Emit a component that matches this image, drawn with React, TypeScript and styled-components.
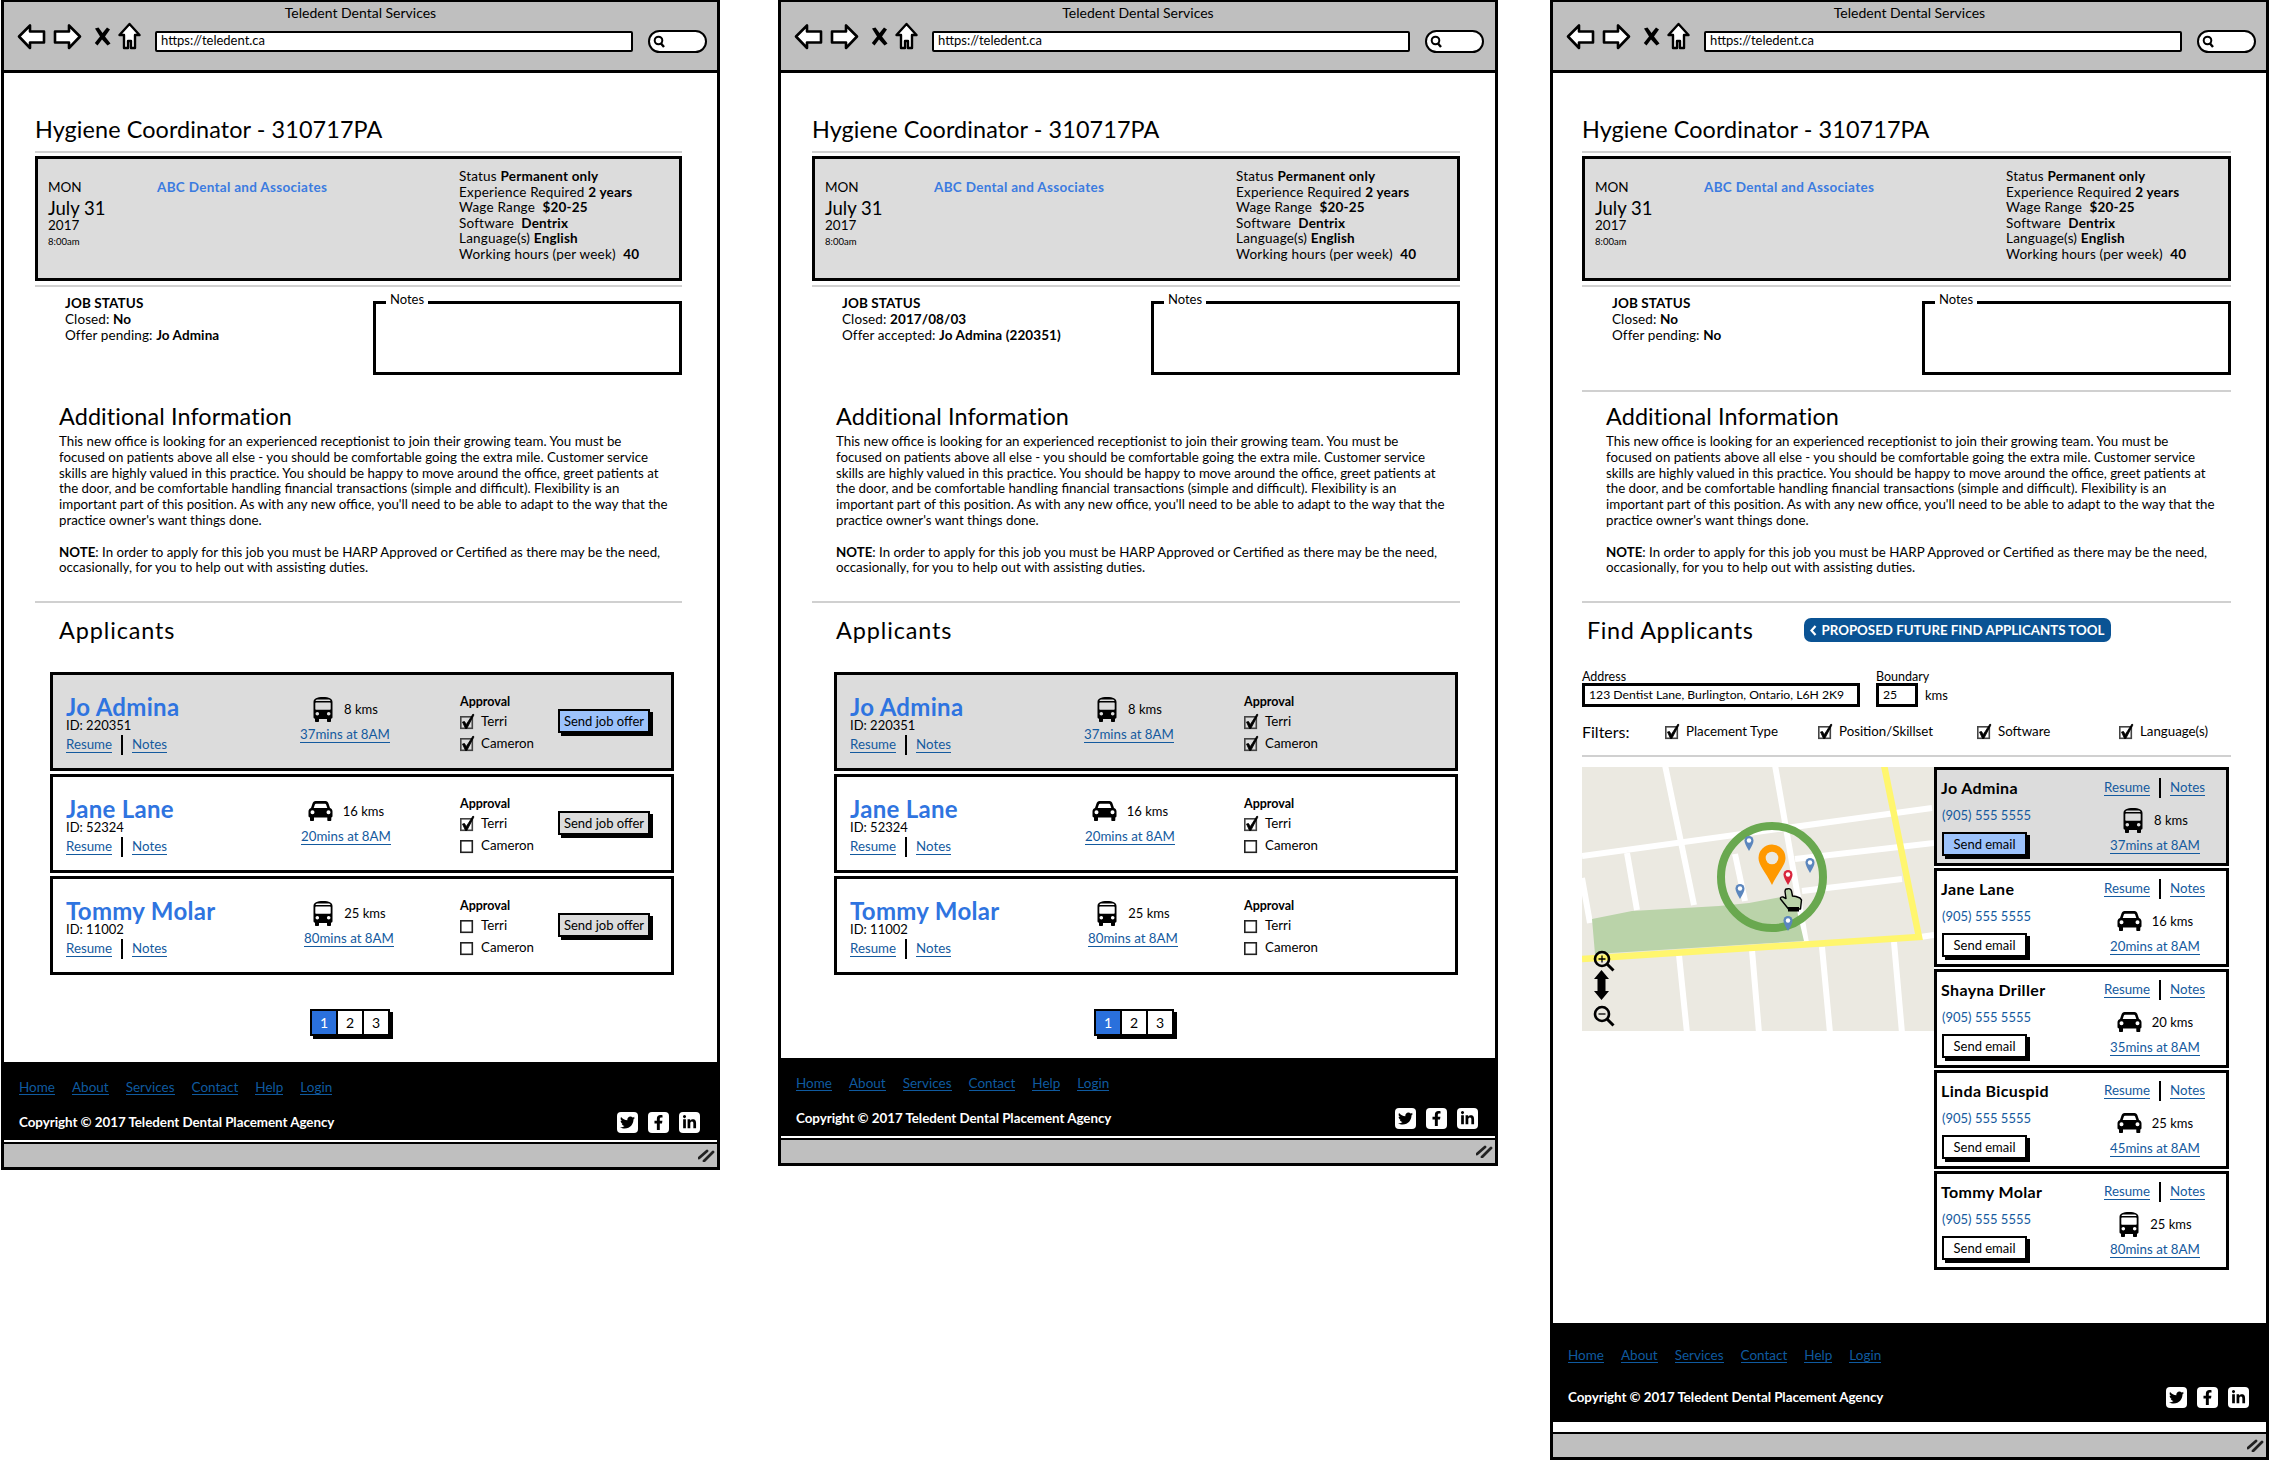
import React from 'react';
import styled, { createGlobalStyle } from 'styled-components';
import { FaTwitter, FaFacebookF, FaLinkedinIn } from 'react-icons/fa';

const Global = createGlobalStyle`
  html, body { margin: 0; padding: 0; background: #fff; }
  body { font-family: Lato, "Open Sans", sans-serif; color: #000; }
  * { box-sizing: border-box; }
`;

const Page = styled.div`
  display: flex;
  align-items: flex-start;
  width: 2269px;
  padding-left: 1px;
`;
const Frame = styled.section<{ $gap: number; $w: number }>`
  width: ${p => p.$w}px;
  margin-left: ${p => p.$gap}px;
  border: 3px solid #000;
  border-top-width: 2px;
  background: #fff;
  flex: none;
`;
const Chrome = styled.header`
  height: 71px;
  background: #bfbfbf;
  border-bottom: 3px solid #000;
  position: relative;
  display: flex;
  flex-direction: column;
  align-items: center;
`;
const ChromeTitle = styled.div`
  font-size: 14px;
  line-height: 18px;
  margin-top: 2px;
`;
const ChromeBar = styled.div`
  width: 100%;
  display: flex;
  align-items: center;
  padding-left: 13px;
  height: 28px;
`;
const NavIcon = styled.svg<{ $mr: number }>`
  margin-right: ${p => p.$mr}px;
  flex: none;
`;
const UrlBar = styled.div`
  width: 478px;
  height: 21px;
  background: #fff;
  border: 2px solid #000;
  border-radius: 2px;
  font-size: 13px;
  line-height: 15px;
  padding-left: 4px;
  margin: 11px 0 0 14px;
`;
const SearchOval = styled.div`
  width: 59px;
  height: 23px;
  margin: 11px 0 0 15px;
  background: #fff;
  border: 2.5px solid #000;
  border-radius: 12px;
  display: flex;
  align-items: center;
  padding-left: 3px;
`;
const Content = styled.main<{ $inset: number }>`
  padding: 0 35px 0 ${p => p.$inset}px;
`;
const PageTitle = styled.h1`
  font-size: 23.4px;
  font-weight: 400;
  line-height: 30px;
  margin: 41px 0 0;
  letter-spacing: 0.1px;
`;
const Rule = styled.hr<{ $mt: number }>`
  height: 2px;
  border: 0;
  background: #d0d0d0;
  margin: ${p => p.$mt}px 0 0;
`;
const JobBox = styled.div`
  height: 125px;
  margin-top: 3px;
  background: #dcdcdc;
  border: 3px solid #000;
  display: grid;
  grid-template-columns: 109px 302px 1fr;
  padding-left: 10px;
`;
const DateCol = styled.div`
  padding-top: 18px;
`;
const DateLine = styled.div<{ $size: number; $lh: number }>`
  font-size: ${p => p.$size}px;
  line-height: ${p => p.$lh}px;
`;
const Company = styled.div`
  padding-top: 20px;
  font-size: 13.5px;
  line-height: 16px;
  font-weight: 700;
  color: #3b7be0;
  letter-spacing: 0.3px;
`;
const FactCol = styled.div`
  padding-top: 10px;
  font-size: 13.5px;
  line-height: 15.5px;
  letter-spacing: 0.2px;
  white-space: nowrap;
`;
const Fact = styled.div``;
const JobRow = styled.div`
  display: flex;
  justify-content: space-between;
  height: 80px;
  margin-top: 8px;
`;
const JobStatus = styled.div`
  padding-left: 30px;
  font-size: 13.5px;
  line-height: 16px;
  letter-spacing: 0.1px;
`;
const NotesBox = styled.div`
  position: relative;
  width: 309px;
  height: 74px;
  margin-top: 6px;
  border: 3px solid #000;
`;
const NotesLegend = styled.span`
  position: absolute;
  top: -12px;
  left: 10px;
  background: #fff;
  padding: 0 4px;
  font-size: 13px;
  line-height: 14px;
`;
const Info = styled.div<{ $mt: number }>`
  padding-left: 24px;
  margin-top: ${p => p.$mt}px;
`;
const SectionTitle = styled.h2<{ $ls?: number }>`
  font-size: 23.4px;
  font-weight: 400;
  line-height: 28px;
  margin: 0;
  letter-spacing: ${p => p.$ls ?? 0}px;
  white-space: nowrap;
`;
const Para = styled.p<{ $mt: number }>`
  font-size: 13.3px;
  line-height: 15.8px;
  margin: ${p => p.$mt}px 0 0;
  white-space: pre-line;
`;
const Rows = styled.div<{ $shift: number }>`
  margin: 28px 0 0 ${p => 15 + p.$shift}px;
  width: 624px;
  display: flex;
  flex-direction: column;
  gap: 3px;
`;
const Row = styled.div<{ $active?: boolean }>`
  height: 99px;
  border: 3px solid #000;
  background: ${p => (p.$active ? '#dcdcdc' : '#fff')};
  display: grid;
  grid-template-columns: 220px 174px 98px 1fr;
  padding-left: 13px;
`;
const NameCol = styled.div`
  padding-top: 19px;
`;
const ApplicantName = styled.div`
  font-size: 24px;
  line-height: 25px;
  font-weight: 700;
  color: #2f74e0;
  letter-spacing: 0.3px;
  white-space: nowrap;
`;
const ApplicantId = styled.div`
  font-size: 13px;
  line-height: 12px;
`;
const LinkPair = styled.div`
  display: flex;
  align-items: center;
  height: 20px;
  margin-top: 4px;
`;
const DocLink = styled.a`
  font-size: 13.3px;
  line-height: 15px;
  color: #145a9e;
  text-decoration: none;
  border-bottom: 1px solid #145a9e;
`;
const PairDivider = styled.span`
  width: 2px;
  height: 20px;
  background: #000;
  margin: 0 9px;
`;
const Distance = styled.div<{ $indent: number }>`
  padding-left: ${p => p.$indent}px;
  width: fit-content;
  display: flex;
  flex-direction: column;
  align-items: center;
`;
const DistanceCol = styled.div`
  padding-top: 22px;
`;
const DriveRow = styled.div`
  display: flex;
  align-items: center;
  gap: 10px;
  height: 24px;
  font-size: 13px;
`;
const DriveLink = styled.a`
  margin-top: 6px;
  font-size: 13.3px;
  line-height: 15px;
  color: #145a9e;
  border-bottom: 1px solid #145a9e;
  white-space: nowrap;
`;
const ApprovalCol = styled.div`
  padding-top: 19px;
`;
const ApprovalTitle = styled.div`
  font-size: 12.5px;
  font-weight: 700;
  line-height: 16px;
`;
const CheckLine = styled.label`
  display: flex;
  align-items: center;
  height: 22px;
  font-size: 13.3px;
  gap: 6px;
  white-space: nowrap;
`;
const ActionCol = styled.div`
  padding-top: 34px;
`;
const SketchButton = styled.button<{ $primary?: boolean; $w: number; $plain?: boolean }>`
  width: ${p => p.$w}px;
  height: 24px;
  padding: 0;
  border: 2.5px solid #000;
  background: ${p => (p.$primary ? '#9cc2fb' : p.$plain ? '#fff' : '#dcdcdc')};
  box-shadow: 3px 3px 0 #000;
  font-family: inherit;
  font-size: 13px;
  color: #000;
  display: block;
`;
const Pager = styled.div<{ $shift: number }>`
  display: flex;
  width: 80px;
  margin: 34px 0 0 ${p => 275 + p.$shift}px;
  border: 2px solid #000;
  box-shadow: 3px 3px 0 #000;
`;
const PageCell = styled.span<{ $on?: boolean }>`
  flex: 1;
  height: 23px;
  text-align: center;
  font-size: 14px;
  line-height: 23px;
  background: ${p => (p.$on ? '#2a70dc' : '#fff')};
  color: ${p => (p.$on ? '#fff' : '#000')};
  & + & { border-left: 2px solid #000; }
`;
const Footer = styled.footer<{ $mt: number; $tall?: boolean }>`
  margin-top: ${p => p.$mt}px;
  height: ${p => (p.$tall ? 99 : 78)}px;
  background: #000;
  padding: ${p => (p.$tall ? '23px 17px 0 15px' : '16px 17px 0 15px')};
  position: relative;
`;
const FootLinks = styled.nav`
  display: flex;
  gap: 17px;
  height: 18px;
  align-items: center;
`;
const FootLink = styled.a`
  font-size: 13.5px;
  line-height: 14px;
  color: #0f5a9f;
  border-bottom: 1px solid #0f5a9f;
`;
const FootBottom = styled.div<{ $tall?: boolean }>`
  display: flex;
  align-items: center;
  justify-content: space-between;
  margin-top: ${p => (p.$tall ? 22 : 15)}px;
  height: 22px;
`;
const Copyright = styled.div`
  color: #fff;
  font-size: 13.4px;
  font-weight: 700;
  letter-spacing: -0.05px;
`;
const Socials = styled.div`
  display: flex;
  gap: 10px;
`;
const SocialTile = styled.span`
  width: 21px;
  height: 21px;
  border-radius: 4px;
  background: #fff;
  color: #000;
  display: flex;
  align-items: center;
  justify-content: center;
  font-size: 15px;
`;
const StatusBar = styled.div<{ $mt: number }>`
  margin-top: ${p => p.$mt}px;
  height: 25px;
  background: #bfbfbf;
  border-top: 2px solid #000;
  display: flex;
  align-items: center;
  justify-content: flex-end;
  padding-right: 2px;
`;
const FindHead = styled.div`
  display: flex;
  align-items: center;
  gap: 50px;
  margin: 13px 0 0 5px;
`;
const ProposedBadge = styled.div`
  width: 307px;
  height: 24px;
  border-radius: 7px;
  background: #0a5394;
  color: #fff;
  font-size: 13.3px;
  font-weight: 700;
  line-height: 24px;
  padding-left: 6px;
  white-space: nowrap;
  display: flex;
  align-items: center;
  gap: 5px;
`;
const SearchForm = styled.div`
  display: flex;
  margin-top: 26px;
  height: 49px;
`;
const FieldGroup = styled.div<{ $w: number }>`
  width: ${p => p.$w}px;
`;
const FieldLabel = styled.div`
  font-size: 12.5px;
  line-height: 13px;
  white-space: nowrap;
`;
const FieldInput = styled.div<{ $w: number }>`
  width: ${p => p.$w}px;
  height: 24px;
  border: 3px solid #000;
  font-size: 12.2px;
  line-height: 18px;
  padding-left: 4px;
  white-space: nowrap;
`;
const BoundaryRow = styled.div`
  display: flex;
  align-items: center;
  gap: 7px;
  font-size: 13px;
`;
const Filters = styled.div`
  display: grid;
  grid-template-columns: 83px 153px 159px 142px 1fr;
  align-items: center;
  height: 24px;
`;
const FiltersLabel = styled.div`
  font-size: 16px;
`;
const FindBody = styled.div`
  display: flex;
  align-items: flex-start;
  margin-top: 10px;
`;
const MapSvg = styled.svg`
  width: 352px;
  height: 264px;
  flex: none;
`;
const ResultList = styled.div`
  width: 295px;
  display: flex;
  flex-direction: column;
  gap: 2px;
`;
const ResultCard = styled.div<{ $active?: boolean }>`
  height: 99px;
  border: 3px solid #000;
  background: ${p => (p.$active ? '#dcdcdc' : '#fff')};
  display: grid;
  grid-template-columns: 163px 1fr;
  padding: 8px 0 0 4px;
`;
const ResultName = styled.div`
  font-size: 16px;
  line-height: 20px;
  font-weight: 700;
  letter-spacing: 0.35px;
  white-space: nowrap;
`;
const Phone = styled.div`
  font-size: 13px;
  line-height: 20px;
  color: #145a9e;
  margin-top: 7px;
  padding-left: 1px;
`;
const CardButtonWrap = styled.div`
  margin-top: 7px;
  padding-left: 1px;
`;
const CardRight = styled.div`
  display: flex;
  flex-direction: column;
`;
const CardLinks = styled(LinkPair)`
  margin-top: 0;
`;
const CardDistance = styled.div`
  margin-top: 10px;
`;
const Footnote = styled.div`
  height: 53px;
`;

const Back = () => (
  <NavIcon $mr={7} width="29" height="27" viewBox="0 0 29 27">
    <path d="M2 13.500 13 2.500v6h14v11H13v5.500z" fill="#fff" stroke="#000" strokeWidth="2.600" strokeLinejoin="round" />
  </NavIcon>
);
const Forward = () => (
  <NavIcon $mr={12} width="29" height="27" viewBox="0 0 29 27">
    <path d="M27 13.500 16 2.500v6H2v11h14v5.500z" fill="#fff" stroke="#000" strokeWidth="2.600" strokeLinejoin="round" />
  </NavIcon>
);
const Stop = () => (
  <NavIcon $mr={7} width="17" height="19" viewBox="0 0 17 19">
    <path d="M1 1.500 4.500.5 8.500 6 13 .5 16 2.500 11 9.500 16.500 16.500 13.500 18.500 8 12.500 3.500 18.500 .8 16 6 9.500z" fill="#000" />
  </NavIcon>
);
const Home = () => (
  <NavIcon $mr={0} width="23" height="28" viewBox="0 0 23 28">
    <path d="M11.500 2 21.500 13H17v13h-4v-7h-3v7H6V13H1.500z" fill="#fff" stroke="#000" strokeWidth="2.400" strokeLinejoin="round" />
  </NavIcon>
);
const Lens = () => (
  <svg width="13" height="14" viewBox="0 0 13 14">
    <circle cx="5.500" cy="5.500" r="3.800" fill="none" stroke="#000" strokeWidth="2" />
    <path d="M8 8.500 11 12" stroke="#000" strokeWidth="2.400" />
  </svg>
);
const Grip = () => (
  <svg width="17" height="13" viewBox="0 0 17 13">
    <path d="M1 9 9 2M6 12 15 3" stroke="#222" strokeWidth="2.800" strokeLinecap="round" />
  </svg>
);
const Bus = () => (
  <svg width="22" height="25" viewBox="0 0 22 25">
    <path
      fillRule="evenodd"
      d="M11 0C5 0 1.500 1.500 1.500 5v15c0 1 .5 1.600 1.500 1.700V24c0 .6.4 1 1 1h2c.6 0 1-.4 1-1v-2h8v2c0 .6.4 1 1 1h2c.6 0 1-.4 1-1v-2.300c1-.1 1.500-.7 1.500-1.700V5C20.500 1.500 17 0 11 0zM6 2.500h10c1.800 0 2.500 .6 2.500 1.500H3.500C3.500 3.100 4.200 2.500 6 2.500zM4 5.500h14c.4 0 .7.3.7.7V12c0 .5-.3.8-.7.8H4c-.4 0-.7-.3-.7-.8V6.200c0-.4.3-.7.7-.7zM5.300 15a1.800 1.800 0 1 1 0 3.600 1.800 1.800 0 0 1 0-3.600zM16.700 15a1.800 1.800 0 1 1 0 3.600 1.800 1.800 0 0 1 0-3.600z"
      fill="#000"
    />
  </svg>
);
const Car = () => (
  <svg width="25" height="20" viewBox="0 0 25 20">
    <path
      fillRule="evenodd"
      d="M7.500 0h10c1.500 0 2.500 1 3 2.500l1.500 4.500c1.500.5 2.500 1.800 2.500 3.500v4.500c0 .8-.5 1.300-1.200 1.500V19c0 .6-.4 1-1 1h-2c-.6 0-1-.4-1-1v-2.500H6V19c0 .6-.4 1-1 1H3c-.6 0-1-.4-1-1v-2.500C1 16.300.5 15.800.5 15v-4.500C.5 8.800 1.500 7.500 3 7l1.500-4.500C5 1 6 0 7.500 0zM8 2.800c-.6 0-1 .3-1.200.9L5.700 7h13.600l-1.100-3.300c-.2-.6-.6-.9-1.200-.9zM4.500 9.300a2 2 0 1 0 0 4 2 2 0 0 0 0-4zM20.500 9.300a2 2 0 1 0 0 4 2 2 0 0 0 0-4z"
      fill="#000"
    />
  </svg>
);
const CheckBox = ({ on }: { on: boolean }) => (
  <svg width="15" height="15" viewBox="0 0 15 15" style={{ flex: 'none', overflow: 'visible' }}>
    <rect x="0.800" y="2.800" width="11.500" height="11.500" fill={on ? 'none' : '#fff'} stroke={on ? '#444' : '#222'} strokeWidth="1.600" />
    {on && <path d="M2.500 8 4.500 7.500 6.300 10.500 13 0 14 .8 6.800 14.500 5.500 14.500z" fill="#000" stroke="#000" strokeWidth=".8" strokeLinejoin="round" />}
  </svg>
);

const Pin = ({ x, y, color }: { x: number; y: number; color: string }) => (
  <g transform={`translate(${x} ${y})`}>
    <path d="M0 8C-3 3-4.500 0-4.500-2.500a4.500 4.500 0 0 1 9 0C4.500 0 3 3 0 8z" fill={color} />
    <circle cx="0" cy="-2.500" r="2.200" fill="#fff" />
  </g>
);

const MapDrawing = () => (
  <MapSvg viewBox="0 0 352 264">
    <rect width="352" height="264" fill="#ebe9e1" />
    <g transform="translate(0 -2)">
      <g stroke="#fff" strokeWidth="6" fill="none">
        <path d="M0 91 350 43M213 94 352 78M220 126 320 114" />
        <path d="M83 0 112 140M193 0 224 178M45 88 55 145M153 89 163 136M0 113 8 158" />
        <path d="M97 190 105 268M170 185 177 268M240 182 248 268M312 177 320 268M338 172 352 170" />
      </g>
      <path d="M10 154 50 146 137 141 167 138 200 132 215 146 222 176 13 189z" fill="#bad3a9" />
      <path d="M0 194 337 172 302 0" fill="none" stroke="#fff66e" strokeWidth="6.500" />
      <circle cx="190" cy="112" r="51" fill="none" stroke="#69a84f" strokeWidth="8" />
      <path d="M190 120C183 106 176.500 100 176.500 93a13.500 13.500 0 0 1 27 0C203.500 100 197 106 190 120z" fill="#ff9900" />
      <circle cx="190" cy="93" r="6.300" fill="#ebe9e1" />
      <Pin x={167} y={78} color="#5b86bd" />
      <Pin x={228} y={100} color="#5b86bd" />
      <Pin x={158} y={126} color="#5b86bd" />
      <Pin x={206} y={158} color="#5b86bd" />
      <Pin x={206} y={112} color="#d9243c" />
      <path
        d="M205 124c2-1 4 0 4.500 2l1 5 3.500.5 4 1.500 1.500 2-1 9h-12l-8-10c-.5-1.500 1-2.500 2.500-2l3 1.500-1-7c0-1 .5-2 1-2.500z"
        fill="#bad3a9"
        stroke="#000"
        strokeWidth="1.400"
        strokeLinejoin="round"
      />
      <rect x="206" y="142" width="11" height="4.500" fill="#000" />
      <circle cx="20" cy="194" r="7" fill="none" stroke="#000" strokeWidth="2.600" />
      <path d="M16.500 194h7M20 190.500v7" stroke="#000" strokeWidth="1.300" />
      <path d="M25 199 31.500 205.500" stroke="#000" strokeWidth="3" />
      <path d="M19.500 205 27 214H23.500v12H27l-7.500 9-7.500-9h3.500V214H12z" fill="#000" />
      <circle cx="20" cy="249" r="7" fill="none" stroke="#000" strokeWidth="2.600" />
      <path d="M16.500 249h7" stroke="#000" strokeWidth="1.300" />
      <path d="M25 254 31.500 260.500" stroke="#000" strokeWidth="3" />
    </g>
  </MapSvg>
);

const lines = `This new office is looking for an experienced receptionist to join their growing team. You must be
focused on patients above all else - you should be comfortable going the extra mile. Customer service
skills are highly valued in this practice. You should be happy to move around the office, greet patients at
the door, and be comfortable handling financial transactions (simple and difficult). Flexibility is an
important part of this position. As with any new office, you'll need to be able to adapt to the way that the
practice owner's want things done.`;

type Applicant = {
  name: string;
  id: string;
  vehicle: 'bus' | 'car';
  kms: string;
  time: string;
  indent: number;
  terri: boolean;
  cameron: boolean;
  active?: boolean;
};
const applicants: Applicant[] = [
  { name: 'Jo Admina', id: '220351', vehicle: 'bus', kms: '8 kms', time: '37mins at 8AM', indent: 14, terri: true, cameron: true, active: true },
  { name: 'Jane Lane', id: '52324', vehicle: 'car', kms: '16 kms', time: '20mins at 8AM', indent: 15, terri: true, cameron: false },
  { name: 'Tommy Molar', id: '11002', vehicle: 'bus', kms: '25 kms', time: '80mins at 8AM', indent: 18, terri: false, cameron: false },
];
const results = [
  { name: 'Jo Admina', vehicle: 'bus', kms: '8 kms', time: '37mins at 8AM', active: true },
  { name: 'Jane Lane', vehicle: 'car', kms: '16 kms', time: '20mins at 8AM' },
  { name: 'Shayna Driller', vehicle: 'car', kms: '20 kms', time: '35mins at 8AM' },
  { name: 'Linda Bicuspid', vehicle: 'car', kms: '25 kms', time: '45mins at 8AM' },
  { name: 'Tommy Molar', vehicle: 'bus', kms: '25 kms', time: '80mins at 8AM' },
];

const Vehicle = ({ kind }: { kind: string }) => (kind === 'bus' ? <Bus /> : <Car />);

const Browser = () => (
  <Chrome>
    <ChromeTitle>Teledent Dental Services</ChromeTitle>
    <ChromeBar>
      <Back />
      <Forward />
      <Stop />
      <Home />
      <UrlBar>https://teledent.ca</UrlBar>
      <SearchOval><Lens /></SearchOval>
    </ChromeBar>
  </Chrome>
);

const Overview = ({ closed, offerLabel, offer, rule }: { closed: string; offerLabel: string; offer: string; rule?: boolean }) => (
  <>
    <PageTitle>Hygiene Coordinator - 310717PA</PageTitle>
    <Rule $mt={7} />
    <JobBox>
      <DateCol>
        <DateLine $size={13.5} $lh={20}>MON</DateLine>
        <DateLine $size={18.5} $lh={22}>July 31</DateLine>
        <DateLine $size={13.5} $lh={12}>2017</DateLine>
        <DateLine $size={9.5} $lh={22}>8:00am</DateLine>
      </DateCol>
      <Company>ABC Dental and Associates</Company>
      <FactCol>
        <Fact>Status <b>Permanent only</b></Fact>
        <Fact>Experience Required <b>2 years</b></Fact>
        <Fact>Wage Range&nbsp; <b>$20-25</b></Fact>
        <Fact>Software&nbsp; <b>Dentrix</b></Fact>
        <Fact>Language(s) <b>English</b></Fact>
        <Fact>Working hours (per week)&nbsp; <b>40</b></Fact>
      </FactCol>
    </JobBox>
    <Rule $mt={4} />
    <JobRow>
      <JobStatus>
        <b>JOB STATUS</b><br />
        Closed: <b>{closed}</b><br />
        {offerLabel} <b>{offer}</b>
      </JobStatus>
      <NotesBox><NotesLegend>Notes</NotesLegend></NotesBox>
    </JobRow>
    {rule && <Rule $mt={15} />}
    <Info $mt={rule ? 10 : 27}>
      <SectionTitle $ls={0.1}>Additional Information</SectionTitle>
      <Para $mt={4}>{lines}</Para>
      <Para $mt={15.8}>
        <b>NOTE</b>: In order to apply for this job you must be HARP Approved or Certified as there may be the need,{'\n'}occasionally, for you to help out with assisting duties.
      </Para>
    </Info>
    <Rule $mt={25} />
  </>
);

const ApplicantRows = ({ shift, offers }: { shift: number; offers?: boolean }) => (
  <Rows $shift={shift}>
    {applicants.map(a => (
      <Row key={a.name} $active={a.active}>
        <NameCol>
          <ApplicantName>{a.name}</ApplicantName>
          <ApplicantId>ID: {a.id}</ApplicantId>
          <LinkPair>
            <DocLink>Resume</DocLink>
            <PairDivider />
            <DocLink>Notes</DocLink>
          </LinkPair>
        </NameCol>
        <DistanceCol>
          <Distance $indent={a.indent}>
            <DriveRow><Vehicle kind={a.vehicle} />{a.kms}</DriveRow>
            <DriveLink>{a.time}</DriveLink>
          </Distance>
        </DistanceCol>
        <ApprovalCol>
          <ApprovalTitle>Approval</ApprovalTitle>
          <CheckLine><CheckBox on={a.terri} />Terri</CheckLine>
          <CheckLine><CheckBox on={a.cameron} />Cameron</CheckLine>
        </ApprovalCol>
        {offers && (
          <ActionCol>
            <SketchButton $w={92} $primary={a.active}>Send job offer</SketchButton>
          </ActionCol>
        )}
      </Row>
    ))}
  </Rows>
);

const SiteFooter = ({ mt, tall, barMt }: { mt: number; tall?: boolean; barMt: number }) => (
  <>
    <Footer $mt={mt} $tall={tall}>
      <FootLinks>
        {['Home', 'About', 'Services', 'Contact', 'Help', 'Login'].map(l => (
          <FootLink key={l}>{l}</FootLink>
        ))}
      </FootLinks>
      <FootBottom $tall={tall}>
        <Copyright>Copyright © 2017 Teledent Dental Placement Agency</Copyright>
        <Socials>
          <SocialTile><FaTwitter /></SocialTile>
          <SocialTile><FaFacebookF /></SocialTile>
          <SocialTile><FaLinkedinIn /></SocialTile>
        </Socials>
      </FootBottom>
    </Footer>
    <StatusBar $mt={barMt}><Grip /></StatusBar>
  </>
);

const ApplicantsTitle = () => (
  <Info $mt={13}>
    <SectionTitle $ls={0.9}>Applicants</SectionTitle>
  </Info>
);

const Pagination = ({ shift }: { shift: number }) => (
  <Pager $shift={shift}>
    <PageCell $on>1</PageCell><PageCell>2</PageCell><PageCell>3</PageCell>
  </Pager>
);

export default function App() {
  return (
    <Page>
      <Global />
      <Frame $gap={0} $w={719}>
        <Browser />
        <Content $inset={31}>
          <Overview closed="No" offerLabel="Offer pending:" offer="Jo Admina" />
          <ApplicantsTitle />
          <ApplicantRows shift={0} offers />
          <Pagination shift={0} />
        </Content>
        <SiteFooter mt={26} barMt={2} />
      </Frame>
      <Frame $gap={58} $w={720}>
        <Browser />
        <Content $inset={31}>
          <Overview closed="2017/08/03" offerLabel="Offer accepted:" offer="Jo Admina (220351)" />
          <ApplicantsTitle />
          <ApplicantRows shift={7} />
          <Pagination shift={7} />
        </Content>
        <SiteFooter mt={22} barMt={2} />
      </Frame>
      <Frame $gap={52} $w={719}>
        <Browser />
        <Content $inset={29}>
          <Overview closed="No" offerLabel="Offer pending:" offer="No" rule />
          <FindHead>
            <SectionTitle $ls={0.6}>Find Applicants</SectionTitle>
            <ProposedBadge>
              <svg width="7" height="11" viewBox="0 0 7 11"><path d="M5.500 1 1.500 5.500 5.500 10" fill="none" stroke="#fff" strokeWidth="2.200" /></svg>
              PROPOSED FUTURE FIND APPLICANTS TOOL
            </ProposedBadge>
          </FindHead>
          <SearchForm>
            <FieldGroup $w={294}>
              <FieldLabel>Address</FieldLabel>
              <FieldInput $w={278}>123 Dentist Lane, Burlington, Ontario, L6H 2K9</FieldInput>
            </FieldGroup>
            <FieldGroup $w={100}>
              <FieldLabel>Boundary</FieldLabel>
              <BoundaryRow>
                <FieldInput $w={42}>25</FieldInput>kms
              </BoundaryRow>
            </FieldGroup>
          </SearchForm>
          <Filters>
            <FiltersLabel>Filters:</FiltersLabel>
            {['Placement Type', 'Position/Skillset', 'Software', 'Language(s)'].map(f => (
              <CheckLine key={f}><CheckBox on />{f}</CheckLine>
            ))}
          </Filters>
          <Rule $mt={12} />
          <FindBody>
            <MapDrawing />
            <ResultList>
              {results.map(r => (
                <ResultCard key={r.name} $active={r.active}>
                  <div>
                    <ResultName>{r.name}</ResultName>
                    <Phone>(905) 555 5555</Phone>
                    <CardButtonWrap>
                      <SketchButton $w={85} $primary={r.active} $plain={!r.active}>Send email</SketchButton>
                    </CardButtonWrap>
                  </div>
                  <CardRight>
                    <CardLinks>
                      <DocLink>Resume</DocLink>
                      <PairDivider />
                      <DocLink>Notes</DocLink>
                    </CardLinks>
                    <CardDistance>
                      <Distance $indent={6}>
                        <DriveRow><Vehicle kind={r.vehicle} />{r.kms}</DriveRow>
                        <DriveLink>{r.time}</DriveLink>
                      </Distance>
                    </CardDistance>
                  </CardRight>
                </ResultCard>
              ))}
            </ResultList>
          </FindBody>
          <Footnote />
        </Content>
        <SiteFooter mt={0} tall barMt={10} />
      </Frame>
    </Page>
  );
}
